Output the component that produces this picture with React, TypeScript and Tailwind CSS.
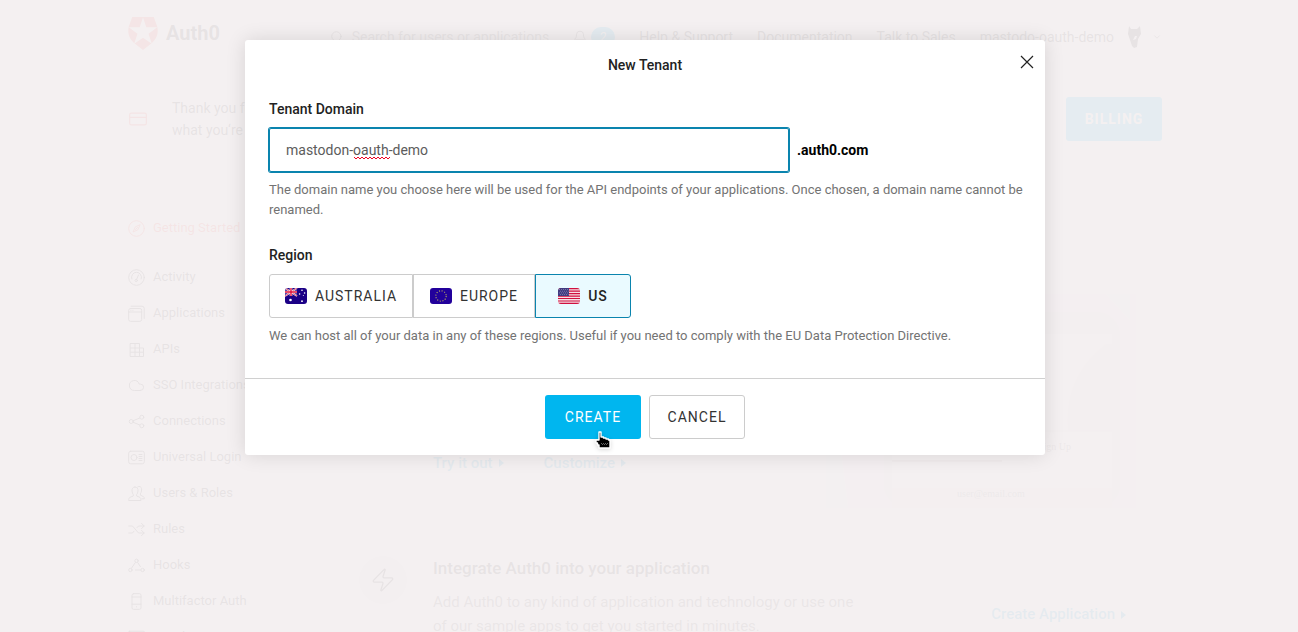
import React from 'react';
import { Bell, ChevronDown, Cloud, CreditCard, Search, Zap } from 'lucide-react';

function LineIcon({ children }: { children: React.ReactNode }) {
  return (
    <svg
      width="17"
      height="17"
      viewBox="0 0 17 17"
      fill="none"
      stroke="currentColor"
      strokeLinecap="round"
      strokeLinejoin="round"
      className="shrink-0"
      aria-hidden="true"
    >
      {children}
    </svg>
  );
}

const compassIcon = (
  <LineIcon>
    <circle cx="8.5" cy="8.5" r="7.8" />
    <path d="M12 5L9.8 9.8L5 12L7.2 7.2ZM7.5 9.5L9.5 7.5" />
  </LineIcon>
);

const sections = [
  {
    label: 'Activity',
    icon: (
      <LineIcon>
        <circle cx="8.5" cy="8.5" r="7.8" />
        <path d="M3.8 10A5 5 0 1 1 13.2 10M10.5 6L8.6 10.4" />
        <circle cx="8.2" cy="11.5" r="1.2" />
      </LineIcon>
    ),
  },
  {
    label: 'Applications',
    icon: (
      <LineIcon>
        <rect x="0.7" y="3.5" width="13" height="12.8" rx="1.8" />
        <path d="M3 1.2H14A2.2 2.2 0 0 1 16.2 3.4V13.5M0.7 7H13.7M2.8 5.3H3M4.8 5.3H5" />
      </LineIcon>
    ),
  },
  {
    label: 'APIs',
    icon: (
      <LineIcon>
        <path d="M2.5 2.5H11.5V7H15.5V15.5H2.5ZM2.5 7H11.5M2.5 11.2H15.5M7 2.5V15.5M11.5 7V15.5" />
      </LineIcon>
    ),
  },
  { label: 'SSO Integrations', icon: <Cloud size={17} strokeWidth={1.4} /> },
  {
    label: 'Connections',
    icon: (
      <LineIcon>
        <circle cx="3.2" cy="8.5" r="2" />
        <circle cx="13.8" cy="4.2" r="2" />
        <circle cx="13.8" cy="12.8" r="2" />
        <path d="M5.2 7.7L11.8 5M5.2 9.3L11.8 12" />
      </LineIcon>
    ),
  },
  {
    label: 'Universal Login',
    icon: (
      <LineIcon>
        <rect x="0.7" y="2.2" width="15.6" height="12.6" rx="2" />
        <circle cx="6" cy="8.5" r="3" />
        <path d="M11 5.5H14M11 7.5H14M11 9.5H14M11 11.5H14" />
      </LineIcon>
    ),
  },
  {
    label: 'Users & Roles',
    icon: (
      <LineIcon>
        <path d="M7 2C4.6 2 3.8 3.8 4 6C4.1 7.6 4.8 8.8 5.3 9.6V11L1.8 12.4C.8 13 .7 14 .7 15.5H13C13 14 12.8 13 12 12.4L8.6 11V9.6C9.3 8.8 10 7.6 10 6C10.2 3.8 9.2 2 7 2Z" />
        <path d="M9.5 2C10 1.5 10.5 1.4 11 1.4C13 1.4 13.8 3 13.6 5C13.5 6.6 13 8 12.4 8.8V10.2L15.2 11.5C16.2 12 16.3 12.8 16.3 13.8H14" />
      </LineIcon>
    ),
  },
  {
    label: 'Rules',
    icon: (
      <LineIcon>
        <path d="M0.7 5H4.5L10.5 12H16.2M0.7 12H4.5L6 10.2M9 6.6L10.5 5H16.2M13.5 2.3L16.2 5L13.5 7.7M13.5 9.3L16.2 12L13.5 14.7" />
      </LineIcon>
    ),
  },
  {
    label: 'Hooks',
    icon: (
      <LineIcon>
        <circle cx="8.5" cy="3.8" r="1.7" />
        <circle cx="2.4" cy="13" r="1.7" />
        <circle cx="14.6" cy="13" r="1.7" />
        <path d="M7.3 5.6L3.5 11.2M9.7 5.6L12.4 9.6M7.5 13H12.5" />
      </LineIcon>
    ),
  },
  {
    label: 'Multifactor Auth',
    icon: (
      <LineIcon>
        <rect x="4" y="0.7" width="9" height="15.6" rx="1.5" />
        <path d="M4 4H13M4 11.2H13M8.4 13.8H8.6" />
      </LineIcon>
    ),
  },
  {
    label: 'Emails',
    icon: (
      <LineIcon>
        <rect x="0.7" y="2.2" width="15.6" height="12.6" rx="1" />
        <path d="M1 3L8.5 9.5L16 3" />
      </LineIcon>
    ),
  },
];

function Shield() {
  return (
    <svg width="30" height="33" viewBox="0 0 30 33" className="text-[#ff4f40]" aria-hidden="true">
      <path
        fill="currentColor"
        fillRule="evenodd"
        d="M4.2 0H25.8L29.2 9.5C31 17 28 22.5 24 26L15 33L6 26C2 22.5 -1 17 0.8 9.5ZM15 0.5L11.7 10.3H0.8L9.5 16.8L6.2 26.8L15 20.8L23.8 26.8L20.5 16.8L29.2 10.3H18.3Z"
      />
    </svg>
  );
}

function Header() {
  return (
    <header className="flex h-[74px] items-center justify-between">
      <div className="flex items-center gap-2 pb-2">
        <Shield />
        <span className="text-xl font-bold">Auth0</span>
      </div>
      <label className="ml-24 flex items-center gap-2">
        <Search size={14} strokeWidth={1.5} />
        <input
          className="w-52 placeholder:text-[#555]"
          placeholder="Search for users or applications"
          aria-label="Search"
        />
      </label>
      <nav className="flex items-center gap-6">
        <span className="flex items-center gap-1">
          <Bell size={14} strokeWidth={1.5} />
          <span className="flex h-5 w-6 items-center justify-center rounded-full bg-[#00b9f1] text-xs text-white">
            2
          </span>
        </span>
        <a href="#support">Help &amp; Support</a>
        <a href="#docs">Documentation</a>
        <a href="#sales">Talk to Sales</a>
        <button type="button" className="flex items-center gap-2">
          mastodo-oauth-demo
          <svg width="22" height="24" viewBox="0 0 22 24" aria-hidden="true">
            <path
              fill="currentColor"
              d="M7 1L9 4H15L18 1L19 9L16 14L15 22L12 23L10 21L8 15L6 9ZM13 11L11 15L14 14L15 11Z"
              fillRule="evenodd"
            />
          </svg>
          <ChevronDown size={10} strokeWidth={2} />
        </button>
      </nav>
    </header>
  );
}

function ArrowLink({ href, children }: { href: string; children: React.ReactNode }) {
  return (
    <a href={href} className="flex items-center gap-1.5 text-[15px] font-medium whitespace-nowrap text-[#009fd4]">
      {children}
      <svg width="5" height="8" viewBox="0 0 5 8" aria-hidden="true">
        <path d="M0 0L5 4L0 8Z" fill="currentColor" />
      </svg>
    </a>
  );
}

function PhonePreview() {
  return (
    <svg className="h-[214px] w-[336px] shrink-0" viewBox="0 0 336 214" aria-hidden="true">
      <rect width="310" height="214" fill="#f3eff0" />
      <path d="M280 0H304V26Z" fill="#eefaf0" />
      <path d="M0 150H14L22 214H0Z" fill="#eefaf0" />
      <rect x="58" y="18" width="236" height="196" rx="24" fill="#e8e4e2" />
      <rect x="66" y="40" width="220" height="174" fill="#faf4f0" />
      <path d="M280 50C244 78 240 110 242 137H286V50Z" fill="#ece8ee" />
      <path d="M66 137H286" stroke="#d8d4d4" />
      <path d="M66 167H176" stroke="#888" />
      <g fontFamily="Liberation Serif, serif" fontSize="10" fill="#777">
        <text x="212" y="156">Sign Up</text>
        <text x="131" y="203">user@email.com</text>
      </g>
      <path d="M66 194H286V214H66Z" fill="#bbb" fillOpacity="0.12" />
    </svg>
  );
}

function Dashboard() {
  return (
    <div className="mx-auto flex max-w-[1034px] flex-col text-sm">
      <Header />
      <section className="flex h-[90px] items-center gap-6">
        <CreditCard size={20} strokeWidth={1.4} className="text-[#ff3e30]" />
        <p className="grow leading-[22px]">
          Thank you for
          <br />
          what you‘re
        </p>
        <button type="button" className="h-11 w-24 rounded-[3px] bg-[#00b9f1] font-bold tracking-[1px] text-white">
          BILLING
        </button>
      </section>
      <div className="flex gap-12">
        <aside className="flex w-36 shrink-0 flex-col pt-[46px] text-[13px]">
          <a href="#start" className="mb-[13px] flex h-9 items-center gap-2 whitespace-nowrap text-[#ff3e30]">
            {compassIcon}
            Getting Started
          </a>
          {sections.map(({ label, icon }) => (
            <a key={label} href="#section" className="flex h-9 shrink-0 items-center gap-2 whitespace-nowrap">
              {icon}
              {label}
            </a>
          ))}
        </aside>
        <main className="flex grow flex-col">
          <section className="mt-[130px] flex h-[214px] bg-[#fbf8f0]">
            <div className="flex grow items-end gap-10 pb-[34px] pl-[113px]">
              <ArrowLink href="#try">Try it out</ArrowLink>
              <ArrowLink href="#customize">Customize</ArrowLink>
            </div>
            <PhonePreview />
          </section>
          <section className="flex gap-[26px] pt-12 pr-9 pl-[39px]">
            <span className="flex size-12 shrink-0 items-center justify-center rounded-full bg-[#e8e4e4]">
              <Zap size={26} strokeWidth={1.2} />
            </span>
            <div className="w-[424px]">
              <h2 className="text-[17px] leading-6 font-medium">Integrate Auth0 into your application</h2>
              <p className="mt-2.5 text-[15px] leading-6 text-[#555]">
                Add Auth0 to any kind of application and technology or use one of our sample apps to get you started in
                minutes.
              </p>
            </div>
            <div className="mt-12 ml-auto">
              <ArrowLink href="#create">Create Application</ArrowLink>
            </div>
          </section>
        </main>
      </div>
    </div>
  );
}

function AustraliaFlag() {
  return (
    <svg width="22" height="16" viewBox="0 0 22 16" className="rounded-[3px]" aria-hidden="true">
      <path fill="#1b0086" d="M0 0H22V16H0z" />
      <path stroke="#fff" strokeWidth="1.6" d="M0 0L12 8M12 0L0 8" />
      <path stroke="#d80027" strokeWidth="0.7" d="M0 0L12 8M12 0L0 8" />
      <path stroke="#fff" strokeWidth="2.6" d="M6 0V8M0 4H12" />
      <path stroke="#e0103a" strokeWidth="1.4" d="M6 0V8M0 4H12" />
      <g fill="#fff">
        <circle cx="5.5" cy="12" r="1.3" />
        <circle cx="17" cy="2.2" r="0.8" />
        <circle cx="14.6" cy="6" r="0.8" />
        <circle cx="19.6" cy="5" r="0.8" />
        <circle cx="17" cy="13.2" r="0.9" />
        <circle cx="18.3" cy="7.6" r="0.5" />
      </g>
    </svg>
  );
}

function EuropeFlag() {
  return (
    <svg width="22" height="16" viewBox="0 0 22 16" className="rounded-[3px]" aria-hidden="true">
      <path fill="#22009b" d="M0 0H22V16H0z" />
      <circle cx="11" cy="8" r="5.2" fill="none" stroke="#b3a860" strokeWidth="1.1" strokeDasharray="1.1 1.622" />
    </svg>
  );
}

function UsFlag() {
  return (
    <svg width="22" height="16" viewBox="0 0 22 16" className="rounded-[3px]" aria-hidden="true">
      <path fill="#f6dfe5" d="M0 0H22V16H0z" />
      <path stroke="#d0103f" strokeWidth="1.2" d="M0 .6H22M0 3.1H22M0 5.6H22M0 8.1H22M0 10.5H22M0 13H22M0 15.4H22" />
      <path fill="#3f3a80" d="M0 0H11V8H0z" />
      <path stroke="#aaa6cc" strokeWidth="0.7" strokeDasharray="0.8 1.2" d="M1 1.5H10.5M2 3.2H10.5M1 4.9H10.5M2 6.6H10.5" />
    </svg>
  );
}

function HandCursor() {
  return (
    <svg
      width="18"
      height="20"
      viewBox="0 0 18 20"
      className="absolute top-9 left-12 drop-shadow-sm"
      aria-hidden="true"
    >
      <path
        d="M6 1H8V6H10.5V7H13V8H15.5V9H17V17H6V14H4.5V12H3V9H6Z"
        fill="#000"
        stroke="#fff"
        strokeWidth="1.4"
        strokeLinejoin="round"
      />
      <path d="M8 12.5H15.5M9 13.5H15" stroke="#777" strokeWidth="0.8" strokeDasharray="1 1" />
    </svg>
  );
}

const regions = [
  { name: 'AUSTRALIA', Flag: AustraliaFlag, shape: 'w-36 rounded-l-[3px]' },
  { name: 'EUROPE', Flag: EuropeFlag, shape: 'w-[122px]' },
  { name: 'US', Flag: UsFlag, shape: 'w-24 rounded-r-[3px]' },
];

function NewTenantDialog() {
  return (
    <form
      role="dialog"
      aria-labelledby="dialog-title"
      onSubmit={(event) => event.preventDefault()}
      className="relative w-[800px] max-w-full rounded-[3px] bg-white text-sm leading-5 text-[#333] shadow-[0_0_20px_rgba(0,0,0,0.12)]"
    >
      <h1 id="dialog-title" className="pt-[15px] text-center font-medium text-[#222]">
        New Tenant
      </h1>
      <button type="button" aria-label="Close" className="absolute top-3.5 right-[11px] text-[#222]">
        <svg width="14" height="16" viewBox="0 0 14 16" aria-hidden="true">
          <path d="M1 2L13 14M13 2L1 14" fill="none" stroke="currentColor" strokeWidth="1.2" />
        </svg>
      </button>
      <div className="pt-6 pr-3 pb-8 pl-6">
        <label htmlFor="domain" className="block font-medium text-[#222]">
          Tenant Domain
        </label>
        <div className="mt-[9px] flex items-center gap-2">
          <div className="relative w-[520px]">
            <input
              id="domain"
              defaultValue="mastodon-oauth-demo"
              spellCheck={false}
              className="h-11 w-full rounded-[2px] border border-[#0a84ae] px-4 text-[#5c5c5c] ring-1 ring-[#0a84ae] outline-none"
            />
            <svg width="36" height="4" viewBox="0 0 36 4" className="absolute top-7 left-[85px]" aria-hidden="true">
              <path
                d="M0 1L2 3L4 1L6 3L8 1L10 3L12 1L14 3L16 1L18 3L20 1L22 3L24 1L26 3L28 1L30 3L32 1L34 3L36 1"
                fill="none"
                stroke="#f00020"
              />
            </svg>
          </div>
          <span className="font-bold text-black">.auth0.com</span>
        </div>
        <p className="mt-2 text-[13px] text-[#737373]">
          The domain name you choose here will be used for the API endpoints of your applications. Once chosen, a domain
          name cannot be renamed.
        </p>
        <fieldset className="mt-[25px]">
          <legend className="font-medium text-[#222]">Region</legend>
          <div className="mt-[9px] flex">
            {regions.map(({ name, Flag, shape }) => (
              <label
                key={name}
                className={`${shape} flex h-11 items-center justify-center gap-2 border border-[#ccc] tracking-[1px] has-checked:border-[#0a84ae] has-checked:bg-[#eafaff] has-checked:font-medium has-checked:text-[#222]`}
              >
                <input type="radio" name="region" className="sr-only" defaultChecked={name === 'US'} />
                <Flag />
                {name}
              </label>
            ))}
          </div>
        </fieldset>
        <p className="mt-2 text-[13px] text-[#737373]">
          We can host all of your data in any of these regions. Useful if you need to comply with the EU Data Protection
          Directive.
        </p>
      </div>
      <footer className="flex justify-center gap-2 border-t border-[#d0d0d0] py-4">
        <div className="relative">
          <button type="submit" className="h-11 w-24 rounded-[3px] bg-[#00b6ef] tracking-[1px] text-white">
            CREATE
          </button>
          <HandCursor />
        </div>
        <button type="button" className="h-11 w-24 rounded-[3px] border border-[#ccc] tracking-[1px]">
          CANCEL
        </button>
      </footer>
    </form>
  );
}

export default function App() {
  return (
    <div className="relative h-screen overflow-hidden bg-white pr-2 font-['Roboto','Liberation_Sans',sans-serif] text-[#222]">
      <Dashboard />
      <div className="absolute inset-0 flex items-start justify-center bg-[#f3eff0]/94 pt-10 pr-2">
        <NewTenantDialog />
      </div>
    </div>
  );
}
